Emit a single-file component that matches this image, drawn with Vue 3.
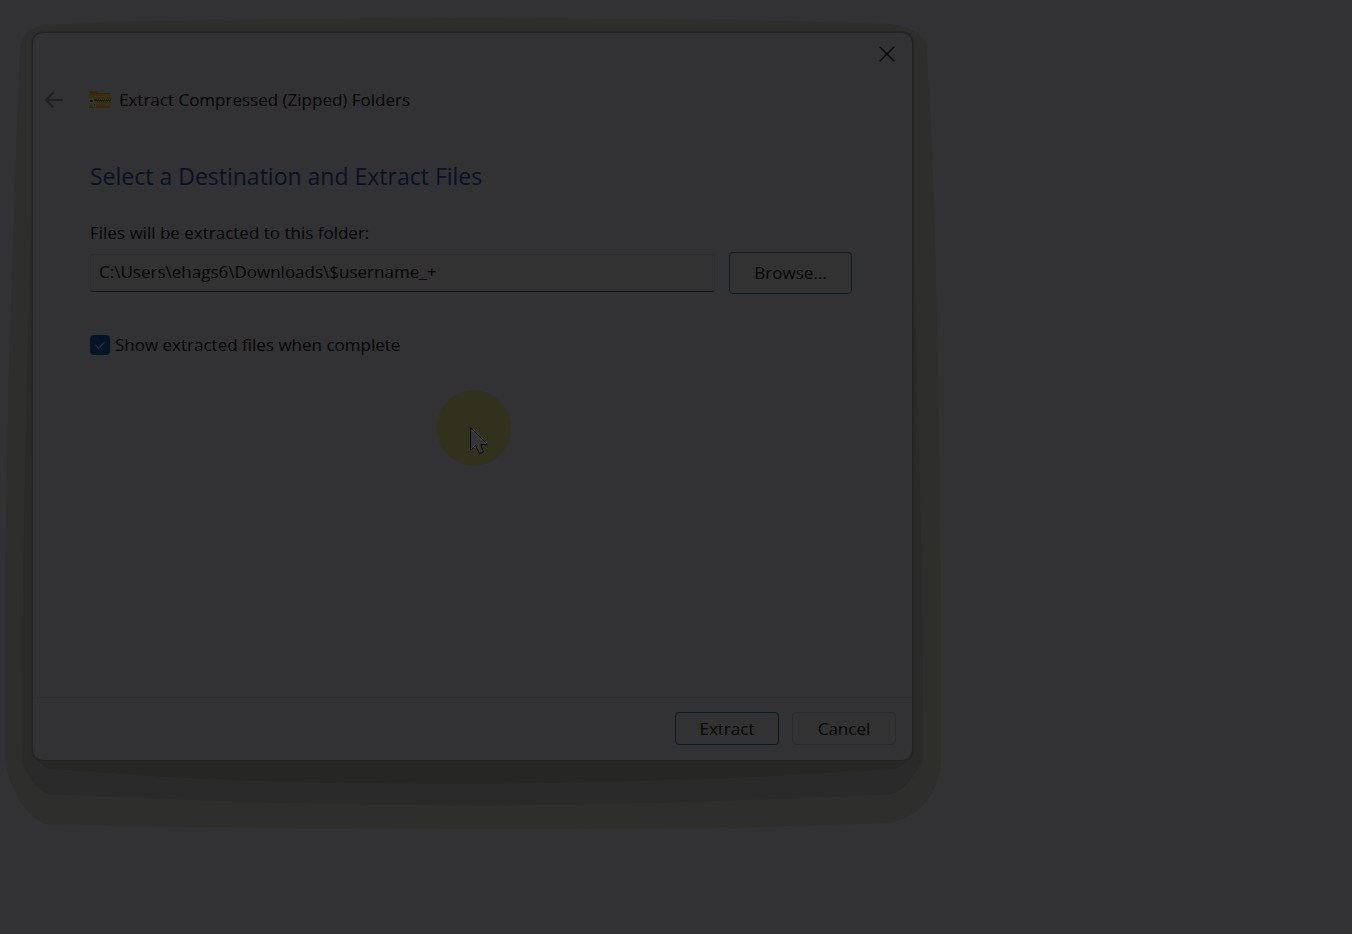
<script setup>
import { ref } from 'vue'

const destination = ref('C:\\Users\\ehags6\\Downloads\\$username_+')
const showFiles = ref(true)
</script>

<template>
  <main class="desktop">
    <section class="dialog" role="dialog" aria-labelledby="dialog-title">
      <svg class="shadow" viewBox="0 0 941 815" preserveAspectRatio="none" aria-hidden="true">
        <path fill="#2e2e2c" d="M16 30Q21 12 41 9L110 6L280 3L460 2L640 3L780 5L885 8Q916 12 922 28L926 90L930 190L934 350L937 580V745Q933 795 887 807L720 812L480 813L200 811L41 808Q12 795 1 745V560L5 350L11 170Z" />
        <path fill="#2a2a2b" d="M29 120L24 320L19 560L18 745Q27 770 43 778L130 782L280 787L480 790L650 787L800 782L888 778Q906 772 919 742L918 560L912 320L908 120Z" />
        <path fill="#262624" d="M32 735Q36 754 48 753L130 759L220 764L330 767L480 768L600 766L730 762L840 756L890 753Q902 751 907 735Z" />
      </svg>
      <div class="surface">
        <header class="titlebar">
          <button class="icon-button" type="button" aria-label="Close">
            <svg width="16" height="16" viewBox="0 0 16 16" fill="none" stroke="#080808" stroke-width="1.5">
              <path d="M.7.7 15.3 15.3M15.3.7.7 15.3" />
            </svg>
          </button>
        </header>
        <div class="wizard">
          <button class="icon-button" type="button" aria-label="Back" disabled>
            <svg width="18" height="16" viewBox="0 0 18 16" fill="none" stroke="#20201f" stroke-width="2" stroke-linecap="round" stroke-linejoin="round">
              <path d="M17 8H1M8 1 1 8l7 7" />
            </svg>
          </button>
          <svg class="folder" width="24" height="20" viewBox="0 0 24 20" aria-hidden="true">
            <path fill="#35280a" d="M1 2Q1 1 2 1H9L11 3H22Q23 3 23 4V17Q23 18 22 18H2Q1 18 1 17Z" />
            <path fill="#3a2f12" d="M1 5H9L11 4H23V17Q23 18 22 18H2Q1 18 1 17Z" />
            <path fill="#33290e" d="M1 16H23V17Q23 18 22 18H2Q1 18 1 17Z" />
            <path fill="#1f1c15" d="M8 9H23V12H8Z" />
            <path stroke="#3c3a30" stroke-width="1" stroke-dasharray="1 1" d="M9 9.500H23" />
            <path stroke="#3c3a30" stroke-width="1" stroke-dasharray="1 1" d="M8 11.500H23" />
            <path fill="#343535" d="M1 9Q1 8 2 8H7V14H4V13H1Z" />
            <path fill="#191c1e" d="M2 10H5V12H2ZM6 9H8V11H6Z" />
            <path fill="#343534" d="M5 13H8V17H5Z" />
            <path fill="#1e211f" d="M6 14H7V16H6Z" />
          </svg>
          <h1 id="dialog-title">Extract Compressed (Zipped) Folders</h1>
        </div>
        <div class="content">
          <h2>Select a Destination and Extract Files</h2>
          <label class="caption" for="destination">Files will be extracted to this folder:</label>
          <div class="path-row">
            <input id="destination" v-model="destination" class="path" type="text" spellcheck="false" />
            <button class="button browse" type="button">Browse...</button>
          </div>
          <label class="option">
            <input v-model="showFiles" type="checkbox" />
            <svg class="tick" width="20" height="20" viewBox="0 0 20 20" fill="none" stroke="#24323e" stroke-width="1.2" aria-hidden="true">
              <path d="m5.500 10 3 3.500 6-6.500" />
            </svg>
            <span>Show extracted files when complete</span>
          </label>
        </div>
        <footer class="actions">
          <button class="button primary" type="button">Extract</button>
          <button class="button" type="button">Cancel</button>
        </footer>
      </div>
    </section>
    <svg class="pointer" width="76" height="76" viewBox="0 0 76 76" aria-hidden="true">
      <circle cx="38" cy="38" r="37.500" fill="#31311e" />
      <path d="M34.500 37.500V60.500L39.500 55.500L43.500 63.500L47.500 62L44.500 54.500H51.500Z" fill="#353537" stroke="#0b0b0b" stroke-width="1" />
    </svg>
  </main>
</template>

<style>
body {
  margin: 0;
  background: #323234;
}
</style>

<style scoped>
.desktop {
  box-sizing: border-box;
  min-height: 100vh;
  padding: 32px;
  position: relative;
  display: flex;
  align-items: flex-start;
  background: #323234;
  color: #050505;
  font-family: "Segoe UI", "Open Sans", "Noto Sans", sans-serif;
  font-size: 17px;
  line-height: 24px;
}

.dialog {
  position: relative;
  width: 68.4%;
  min-width: 560px;
  min-height: calc(100vh - 205px);
  display: flex;
}

.shadow {
  position: absolute;
  top: -16px;
  left: -28px;
  width: calc(100% + 60px);
  height: calc(100% + 86px);
}

.surface {
  position: relative;
  box-sizing: border-box;
  flex: 1;
  display: flex;
  flex-direction: column;
  border: 1px solid #222221;
  border-radius: 11px;
  box-shadow: 0 0 0 1px #272726;
  background: #323234;
}

.titlebar {
  display: flex;
  justify-content: flex-end;
  padding: 8px 12px 0;
}

.icon-button {
  display: grid;
  place-items: center;
  width: 26px;
  height: 26px;
  padding: 0;
  border: 0;
  background: none;
}

.wizard {
  display: flex;
  align-items: center;
  padding: 20px 8px 0;
}

.folder {
  margin: 0 7px 0 21px;
}

h1,
h2 {
  margin: 0;
  font-weight: 400;
}

h1 {
  font-size: 17px;
  line-height: 26px;
}

.content {
  flex: 1;
  padding: 47px 60px 32px 57px;
}

h2 {
  color: #091124;
  font-size: 23px;
  line-height: 32px;
}

.caption {
  display: block;
  margin-top: 29px;
}

.path-row {
  display: flex;
  align-items: center;
  gap: 14px;
  margin-top: 7px;
}

.path {
  box-sizing: border-box;
  flex: 1;
  min-width: 0;
  height: 38px;
  padding: 0 8px 3px;
  border: 1px solid #2e2e30;
  border-bottom-color: #161617;
  border-radius: 3px;
  outline: 0;
  background: #323233;
  color: inherit;
  font: inherit;
}

.button {
  box-sizing: border-box;
  width: 104px;
  height: 33px;
  padding: 0;
  border: 1px solid #2b2b2d;
  border-radius: 4px;
  background: #323233;
  color: inherit;
  font: inherit;
}

.browse {
  width: 123px;
  height: 42px;
  border-color: #101c23;
}

.primary {
  border-color: #091b2b;
}

.option {
  position: relative;
  display: flex;
  align-items: center;
  gap: 5px;
  width: fit-content;
  margin-top: 39px;
}

.option input {
  appearance: none;
  width: 20px;
  height: 20px;
  margin: 0;
  border-radius: 4px;
  background: #041528;
}

.tick {
  position: absolute;
  top: 2px;
  left: 0;
  visibility: hidden;
}

.option input:checked + .tick {
  visibility: visible;
}

.actions {
  display: flex;
  justify-content: flex-end;
  gap: 13px;
  padding: 14px 16px 15px;
  border-top: 1px solid #2e2e30;
}

.pointer {
  position: absolute;
  top: 390px;
  left: 436px;
}
</style>
